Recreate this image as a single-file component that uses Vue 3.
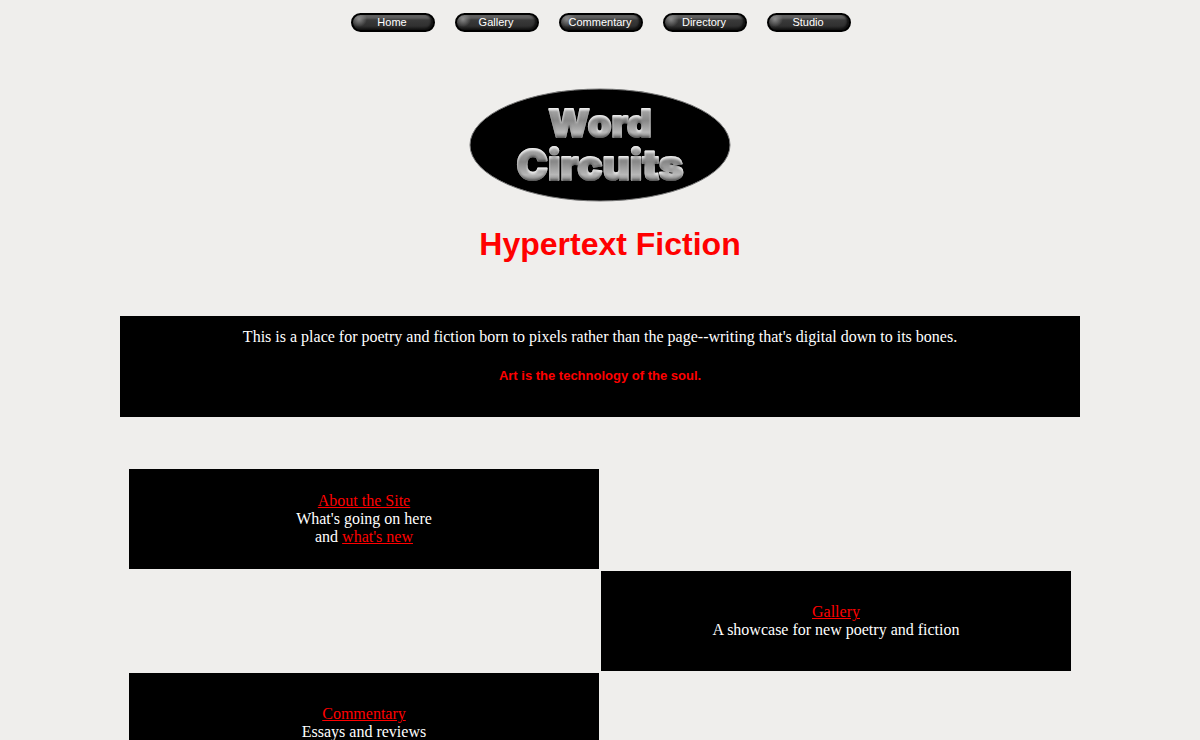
<script setup>
const navLinks = ['Home', 'Gallery', 'Commentary', 'Directory', 'Studio'];
</script>

<template>
  <div class="page">
    <nav class="nav">
      <a v-for="name in navLinks" :key="name" class="nav-button" :href="'#' + name.toLowerCase()">{{ name }}</a>
    </nav>

    <header class="header">
      <svg class="logo" xmlns="http://www.w3.org/2000/svg" width="264" height="116" viewBox="0 0 264 116" role="img">
        <defs>
          <linearGradient id="metal" x1="0" y1="0" x2="0" y2="1">
            <stop offset="0.2" stop-color="#a8a8a8"></stop>
            <stop offset="0.45" stop-color="#888"></stop>
            <stop offset="0.7" stop-color="#b8b8b8"></stop>
            <stop offset="0.85" stop-color="#808080"></stop>
          </linearGradient>
          <!-- light upper edge and dark lower edge on the lettering -->
          <filter id="bevel" x="-5%" y="-10%" width="110%" height="120%">
            <feGaussianBlur in="SourceAlpha" stdDeviation="1" result="blur"></feGaussianBlur>
            <feOffset in="blur" dx="0" dy="2" result="down"></feOffset>
            <feOffset in="blur" dx="0" dy="-2" result="up"></feOffset>
            <feFlood flood-color="#fff" flood-opacity="0.8"></feFlood>
            <feComposite in2="SourceAlpha" operator="in"></feComposite>
            <feComposite in2="down" operator="out" result="light"></feComposite>
            <feFlood flood-color="#222" flood-opacity="0.7"></feFlood>
            <feComposite in2="SourceAlpha" operator="in"></feComposite>
            <feComposite in2="up" operator="out" result="dark"></feComposite>
            <feMerge>
              <feMergeNode in="SourceGraphic"></feMergeNode>
              <feMergeNode in="dark"></feMergeNode>
              <feMergeNode in="light"></feMergeNode>
            </feMerge>
          </filter>
        </defs>
        <ellipse cx="132" cy="57" rx="130" ry="56" fill="#000" stroke="#777" stroke-width="1"></ellipse>
        <g class="logo-text" fill="url(#metal)" stroke="url(#metal)" stroke-width="2" stroke-linejoin="round" text-anchor="middle">
          <text x="132" y="49" font-size="38" filter="url(#bevel)">Word</text>
          <text x="132" y="92" font-size="42" filter="url(#bevel)">Circuits</text>
        </g>
      </svg>
      <h1 class="title">Hypertext Fiction</h1>
    </header>

    <main class="content">
      <section class="intro">
        <p>This is a place for poetry and fiction born to pixels rather than the page--writing that's digital down to its bones.</p>
        <p class="motto">Art is the technology of the soul.</p>
      </section>

      <section class="sections">
        <div class="row">
          <div class="cell">
            <a href="#about">About the Site</a>
            <span>What's going on here</span>
            <span>and <a href="#new">what's new</a></span>
          </div>
        </div>
        <div class="row row-right">
          <div class="cell">
            <a href="#gallery">Gallery</a>
            <span>A showcase for new poetry and fiction</span>
          </div>
        </div>
        <div class="row">
          <div class="cell">
            <a href="#commentary">Commentary</a>
            <span>Essays and reviews</span>
          </div>
        </div>
      </section>
    </main>
  </div>
</template>

<style>
body {
  margin: 0;
  background-color: #efeeec;
}
</style>

<style scoped>
.page {
  font-family: "Liberation Serif", "Times New Roman", serif;
  font-size: 16px;
  line-height: 18px;
  color: #fff;
}

.nav {
  display: flex;
  justify-content: center;
  gap: 20px;
  padding: 13px 0 0 2px;
}

.nav-button {
  box-sizing: border-box;
  width: 84px;
  height: 19px;
  padding-right: 2px;
  border: 2px solid #000;
  border-radius: 10px;
  background: radial-gradient(circle at 6px 4px, #8a8a8a 0, rgba(120, 120, 120, 0) 8px),
    linear-gradient(#666 0, #5a5a5a 3px, #3a3a3a 5px, #303030 11px, #161616 100%);
  box-shadow: inset -2px -1px 2px #111;
  font-family: "Liberation Sans", Arial, sans-serif;
  font-size: 11px;
  line-height: 15px;
  text-align: center;
  text-decoration: none;
  color: #fff;
}

.header {
  display: flex;
  flex-direction: column;
  align-items: center;
  padding-top: 56px;
}

.logo {
  display: block;
}

.logo-text {
  font-family: Inter, "Liberation Sans", sans-serif;
  font-weight: 900;
}

.title {
  margin: 0;
  padding: 22px 0 0 20px;
  font-family: "Liberation Sans", Arial, sans-serif;
  font-size: 32px;
  font-weight: bold;
  line-height: 36px;
  color: #f00;
}

.content {
  width: 80%;
  margin: 54px auto 0;
}

.intro {
  padding: 12px 16px 32px;
  background-color: #000;
  text-align: center;
}

.intro p {
  margin: 0;
}

.intro .motto {
  margin-top: 21px;
  font-family: "Liberation Sans", Arial, sans-serif;
  font-size: 13px;
  font-weight: bold;
  color: #f00;
}

.sections {
  display: flex;
  flex-direction: column;
  gap: 2px;
  padding: 52px 9px 0;
}

.row {
  display: flex;
}

.row-right {
  justify-content: flex-end;
}

.cell {
  display: flex;
  flex-direction: column;
  align-items: center;
  justify-content: center;
  width: calc(50% - 1px);
  min-height: 100px;
  background-color: #000;
  text-align: center;
}

.cell a {
  color: #f00;
}
</style>
